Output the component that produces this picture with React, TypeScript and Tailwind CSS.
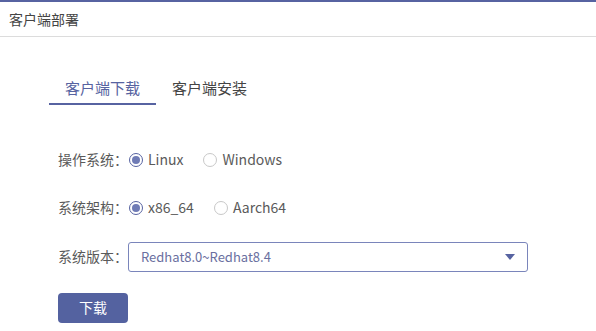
import { useState } from "react";

const Radio = ({
  checked,
  label,
  onClick,
}: {
  checked: boolean;
  label: string;
  onClick: () => void;
}) => (
  <button type="button" onClick={onClick} className="flex items-center gap-[5px]">
    <span
      className={`flex h-[14px] w-[14px] items-center justify-center rounded-full border ${
        checked ? "border-[#5763a1]" : "border-[#c8c8c8]"
      } bg-white`}
    >
      {checked && <span className="h-[8px] w-[8px] rounded-full bg-[#6f7bb5]" />}
    </span>
    <span className="text-[14px] text-[#5a5a5a]">{label}</span>
  </button>
);

const App = () => {
  const [tab, setTab] = useState("download");
  const [os, setOs] = useState("linux");
  const [arch, setArch] = useState("x86");

  return (
    <div
      className="h-[331px] w-[596px] overflow-hidden border-t-2 border-[#5763a1] bg-white"
      style={{ fontFamily: '"Noto Sans CJK SC", "Noto Sans", sans-serif' }}
    >
      <header className="flex h-[35px] items-center border-b border-[#dcdcdc] px-[9px] text-[14px] text-[#444]">
        客户端部署
      </header>

      <div className="px-[49px] pt-[40px]">
        <div className="flex gap-[16px]">
          <button
            onClick={() => setTab("download")}
            className={`border-b-2 px-[16px] pb-[3px] text-[15px] ${
              tab === "download" ? "border-[#5763a1] text-[#5763a1]" : "border-transparent text-[#444]"
            }`}
          >
            客户端下载
          </button>
          <button
            onClick={() => setTab("install")}
            className={`border-b-2 pb-[3px] text-[15px] ${
              tab === "install" ? "border-[#5763a1] text-[#5763a1]" : "border-transparent text-[#444]"
            }`}
          >
            客户端安装
          </button>
        </div>

        <div className="flex flex-col pl-[9px] pt-[43px]">
          <div className="flex h-[24px] items-center">
            <span className="w-[71px] text-[14px] text-[#5a5a5a]">操作系统：</span>
            <div className="flex items-center gap-[20px]">
              <Radio checked={os === "linux"} label="Linux" onClick={() => setOs("linux")} />
              <Radio checked={os === "windows"} label="Windows" onClick={() => setOs("windows")} />
            </div>
          </div>

          <div className="mt-[24px] flex h-[24px] items-center">
            <span className="w-[71px] text-[14px] text-[#5a5a5a]">系统架构：</span>
            <div className="flex items-center gap-[20px]">
              <Radio checked={arch === "x86"} label="x86_64" onClick={() => setArch("x86")} />
              <Radio checked={arch === "aarch"} label="Aarch64" onClick={() => setArch("aarch")} />
            </div>
          </div>

          <div className="mt-[22px] flex items-center">
            <span className="w-[70px] text-[14px] text-[#5a5a5a]">系统版本：</span>
            <div className="flex h-[30px] w-[400px] items-center justify-between rounded-[3px] border border-[#7a85bb] px-[12px]">
              <span className="text-[13px] text-[#6a6fa0]">Redhat8.0~Redhat8.4</span>
              <svg width="10" height="6" viewBox="0 0 10 6">
                <path d="M0 0h10L5 6z" fill="#5763a1" />
              </svg>
            </div>
          </div>

          <button className="mt-[21px] flex h-[30px] w-[70px] items-center justify-center rounded-[4px] bg-[#5462a0] text-[14px] text-white">
            下载
          </button>
        </div>
      </div>
    </div>
  );
};

export default App;
